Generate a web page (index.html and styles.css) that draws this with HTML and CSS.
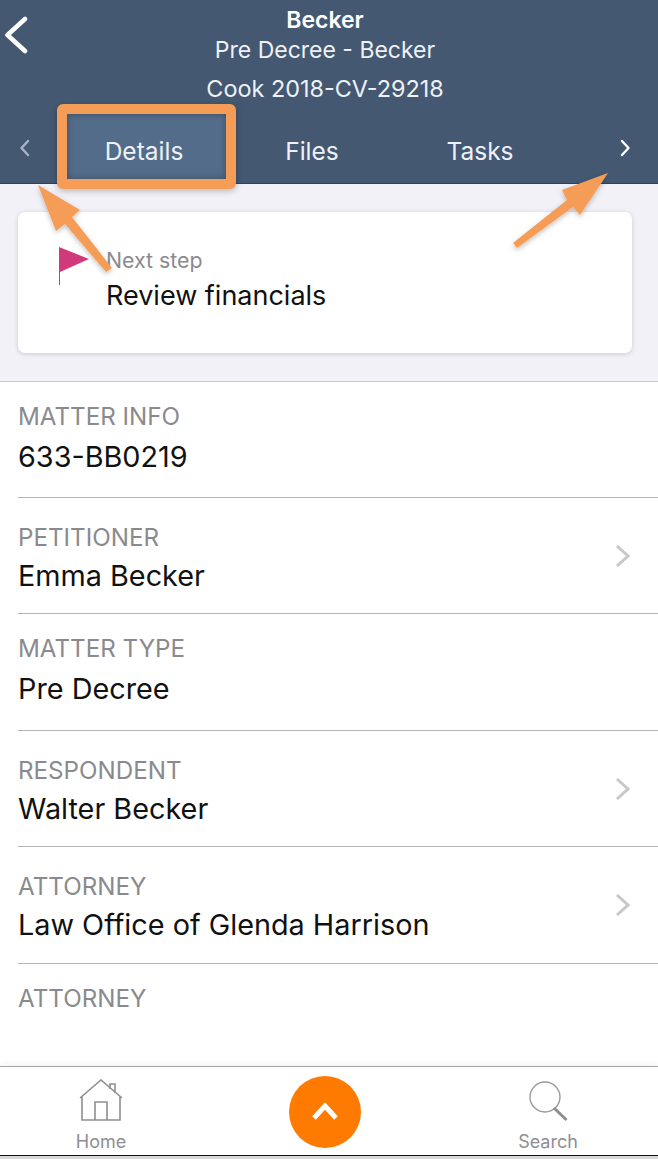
FILE: index.html
```html
<!DOCTYPE html>
<html lang="en">
<head>
  <meta charset="UTF-8" />
  <title>Becker</title>
  <link rel="stylesheet" href="styles.css">
</head>
<body>
  <div class="page">
    <header class="header">
      <svg class="back" width="26" height="40" viewBox="0 0 26 40"><path d="M23 4 L5.5 20 L23 36" fill="none" stroke="#fff" stroke-width="4.5" stroke-linecap="round" stroke-linejoin="round"/></svg>
      <div class="title">Becker</div>
      <div class="subtitle">Pre Decree - Becker</div>
      <div class="case">Cook 2018-CV-29218</div>
      <nav class="tabs">
        <svg class="tab-arrow" width="14" height="18" viewBox="0 0 14 18"><path d="M10 2 L3.5 9 L10 16" fill="none" stroke="#a9b5c4" stroke-width="2.4" stroke-linecap="round" stroke-linejoin="round"/></svg>
        <div class="tab-list">
          <div class="tab tab-active">Details</div>
          <div class="tab">Files</div>
          <div class="tab">Tasks</div>
        </div>
        <svg class="tab-arrow" width="14" height="18" viewBox="0 0 14 18"><path d="M4 2 L10.5 9 L4 16" fill="none" stroke="#fff" stroke-width="2.4" stroke-linecap="round" stroke-linejoin="round"/></svg>
      </nav>
    </header>

    <section class="step-area">
      <div class="step-card">
        <svg class="flag" width="32" height="40" viewBox="0 0 32 40"><path d="M1 1 L31 13 L2 26 L2 39 L1 39 Z" fill="#d1397a"/></svg>
        <div>
          <div class="step-label">Next step</div>
          <div class="step-value">Review financials</div>
        </div>
      </div>
    </section>

    <main class="list">
      <div class="row">
        <div><div class="row-label">MATTER INFO</div><div class="row-value">633-BB0219</div></div>
      </div>
      <div class="row row-link">
        <div><div class="row-label">PETITIONER</div><div class="row-value">Emma Becker</div></div>
        <svg class="chevron" width="16" height="26" viewBox="0 0 16 26"><path d="M2 3 L13 13 L2 23" fill="none" stroke="#c7c7cc" stroke-width="3"/></svg>
      </div>
      <div class="row">
        <div><div class="row-label">MATTER TYPE</div><div class="row-value">Pre Decree</div></div>
      </div>
      <div class="row row-link">
        <div><div class="row-label">RESPONDENT</div><div class="row-value">Walter Becker</div></div>
        <svg class="chevron" width="16" height="26" viewBox="0 0 16 26"><path d="M2 3 L13 13 L2 23" fill="none" stroke="#c7c7cc" stroke-width="3"/></svg>
      </div>
      <div class="row row-link">
        <div><div class="row-label">ATTORNEY</div><div class="row-value">Law Office of Glenda Harrison</div></div>
        <svg class="chevron" width="16" height="26" viewBox="0 0 16 26"><path d="M2 3 L13 13 L2 23" fill="none" stroke="#c7c7cc" stroke-width="3"/></svg>
      </div>
      <div class="row row-last">
        <div><div class="row-label">ATTORNEY</div></div>
      </div>
    </main>

    <footer class="tabbar">
      <div class="bar-item">
        <svg width="44" height="44" viewBox="0 0 44 44"><path d="M1 19 L22 1 L43 19 M31 10 L31 5 L36 5 L36 14 M3 17 L3 41 L41 41 L41 17 M16 41 L16 23 L28 23 L28 41" fill="none" stroke="#8e8e93" stroke-width="1.6"/></svg>
        <span>Home</span>
      </div>
      <div class="fab">
        <svg width="28" height="20" viewBox="0 0 28 20"><path d="M3 16 L14 4 L25 16" fill="none" stroke="#fff" stroke-width="5"/></svg>
      </div>
      <div class="bar-item">
        <svg width="44" height="44" viewBox="0 0 44 44"><circle cx="19" cy="18" r="15" fill="none" stroke="#9a9a9e" stroke-width="1.4"/><path d="M28 29 L40.5 41" fill="none" stroke="#8e8e93" stroke-width="3"/></svg>
        <span>Search</span>
      </div>
    </footer>

    <svg class="annotations" width="658" height="300" viewBox="0 0 658 300">
      <defs>
        <filter id="soft" x="-20%" y="-20%" width="140%" height="140%"><feDropShadow dx="0" dy="2" stdDeviation="2.5" flood-color="#000" flood-opacity="0.25"/></filter>
      </defs>
      <g filter="url(#soft)">
        <path d="M38 185 L80 210 L72 217 L112 268 L106 272 L65 224 L56 231 Z" fill="#f59c56"/>
        <path d="M608 173 L562 190 L567 200 L513 243 L517 248 L573 207 L580 215 Z" fill="#f59c56"/>
      </g>
    </svg>
  </div>
</body>
</html>
```

FILE: styles.css
```css
* { box-sizing: border-box; }
body { margin: 0; background: #fff; font-family: Inter, "Liberation Sans", sans-serif; }
.page { position: relative; width: 658px; height: 1159px; overflow: hidden; display: flex; flex-direction: column; background: #d8d8d8; }

.header { position: relative; flex: none; height: 184px; background: #445872; color: #fff; text-align: center; padding: 6px 8px 0 0; border-bottom: 1px solid #2f4058; }
.back { position: absolute; left: 2px; top: 15px; }
.title { font-size: 23px; font-weight: 600; line-height: 28px; }
.subtitle { font-size: 23px; line-height: 32px; color: #eef1f5; }
.case { font-size: 23.4px; line-height: 32px; margin-top: 7px; color: #eef1f5; }

.tabs { position: absolute; left: 0; right: 0; top: 104px; height: 80px; padding: 0 26px 0 18px; display: flex; justify-content: space-between; }
.tab-arrow { flex: none; margin-top: 35px; }
.tab-list { display: flex; margin-right: auto; margin-left: 28px; }
.tab { position: relative; z-index: 0; width: 168px; padding-top: 34px; font-size: 24.5px; line-height: 26px; color: #eef1f5; }
.tab-active::before { content: ""; position: absolute; z-index: -1; left: -3px; right: -8px; top: 0; bottom: -5px; background: #536c8a; border: 10px solid #f59c56; border-radius: 6px; box-shadow: 0 2px 6px rgba(0,0,0,0.25), inset 0 0 6px rgba(0,0,0,0.3); }

.step-area { flex: none; height: 197.6px; background: #f1f1f7; padding: 28px 26px 0 18px; border-bottom: 1px solid #c9c9cd; }
.step-card { height: 141px; background: #fff; border-radius: 7px; box-shadow: 0 1px 5px rgba(0,0,0,0.16); padding: 34px 0 0 40px; display: flex; gap: 16px; }
.flag { flex: none; }
.step-label { font-size: 21.3px; line-height: 28px; color: #8a8a8e; }
.step-value { font-size: 27px; line-height: 44px; color: #111; }

.list { flex: 1; padding-left: 18px; background: #fff; }
.row { height: 116.4px; padding: 18px 27px 0 0; border-bottom: 1px solid #b5b5b8; display: flex; justify-content: space-between; }
.row-link { padding-top: 23px; }
.row-link .row-value { margin-top: -2px; }
.row-last { border-bottom: none; height: 90px; padding-top: 18px; }
.row-label { font-size: 24.2px; line-height: 34px; color: #8a8a8e; }
.row-value { font-size: 28.8px; line-height: 46px; color: #111; }
.chevron { flex: none; margin-top: 22px; }

.tabbar { position: relative; flex: none; height: 90px; margin-bottom: 3px; border-top: 1px solid #a5a5a8; border-bottom: 1px solid #111; display: flex; justify-content: space-between; padding: 12px 84px 0 75px; background: #fff; box-shadow: 0 -3px 6px rgba(0,0,0,0.04); }
.bar-item { width: 52px; display: flex; flex-direction: column; align-items: center; color: #8e8e93; font-size: 18px; line-height: 22px; gap: 8px; }
.fab { position: absolute; left: 289px; top: 9px; width: 72px; height: 72px; border-radius: 50%; background: #ff7a00; display: flex; align-items: center; justify-content: center; }

.annotations { position: absolute; left: 0; top: 0; pointer-events: none; }
```
